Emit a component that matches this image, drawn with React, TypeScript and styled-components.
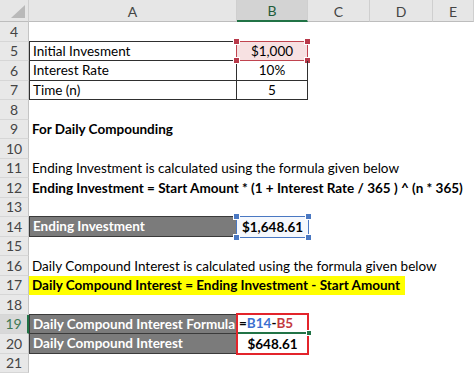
import React from 'react'
import styled, { createGlobalStyle, css } from 'styled-components'

const GlobalStyle = createGlobalStyle`
  html, body {
    margin: 0;
    padding: 0;
    background: #ffffff;
  }
  body {
    font-family: Lato, "Liberation Sans", sans-serif;
    font-size: 13.5px;
    color: #000000;
    overflow: hidden;
  }
`

const Sheet = styled.div`
  display: grid;
  grid-template-columns: 29px 208px 71px 62px 63px 1fr;
  grid-template-rows: 22px repeat(18, 19.5px);
  width: 474px;
  height: 373px;
  overflow: hidden;
`

const Corner = styled.div`
  background: #e6e6e6;
  border-right: 1px solid #cfcfcf;
  border-bottom: 1px solid #bdbdbd;
  display: flex;
  align-items: flex-end;
  justify-content: flex-end;
  padding: 0 3px 3px 0;
  box-sizing: border-box;
`

const ColHeader = styled.div<{ $active?: boolean }>`
  background: ${({ $active }) => ($active ? '#d3d3d3' : '#e6e6e6')};
  border-right: 1px solid #cfcfcf;
  border-bottom: ${({ $active }) => ($active ? '2px solid #217346' : '1px solid #bdbdbd')};
  color: ${({ $active }) => ($active ? '#1f5c3a' : '#444444')};
  display: flex;
  align-items: center;
  justify-content: center;
  box-sizing: border-box;
  font-size: 14px;
  padding-top: 1px;
`

const RowNum = styled.div<{ $active?: boolean }>`
  background: ${({ $active }) => ($active ? '#d8d8d8' : '#e8e8e8')};
  border-bottom: 1px solid #d6d6d6;
  border-right: ${({ $active }) => ($active ? '2px solid #217346' : '1px solid #c4c4c4')};
  color: ${({ $active }) => ($active ? '#3f7a55' : '#444444')};
  display: flex;
  align-items: center;
  justify-content: center;
  box-sizing: border-box;
  font-size: 14px;
`

const LineText = styled.div<{ $bold?: boolean }>`
  grid-column: 2 / -1;
  display: flex;
  align-items: center;
  padding-left: 3px;
  white-space: nowrap;
  font-weight: ${({ $bold }) => ($bold ? 700 : 400)};
`

const Highlight = styled.span`
  display: flex;
  align-items: center;
  align-self: stretch;
  width: 373px;
  margin-left: -3px;
  padding-left: 3px;
  background: #ffff00;
`

const Empty = styled.div`
  grid-column: 2 / -1;
`

const LabelCell = styled.div<{ $dark?: boolean; $top?: boolean }>`
  display: flex;
  align-items: center;
  padding-left: 3px;
  box-sizing: border-box;
  white-space: nowrap;
  border: 1px solid #2f2f2f;
  border-top-width: ${({ $top }) => ($top ? '1px' : '0')};
  margin-top: ${({ $top }) => ($top ? '-1px' : '0')};
  ${({ $dark }) =>
    $dark &&
    css`
      background: #7b7b7b;
      color: #ffffff;
      font-weight: 700;
      border-color: #3a3a3a;
    `}
`

const ValueCell = styled.div<{ $top?: boolean; $bold?: boolean; $plain?: boolean }>`
  position: relative;
  display: flex;
  align-items: center;
  justify-content: center;
  box-sizing: border-box;
  border-right: 1px solid #2f2f2f;
  border-bottom: 1px solid #2f2f2f;
  border-top: ${({ $top }) => ($top ? '1px solid #2f2f2f' : '0')};
  margin-top: ${({ $top }) => ($top ? '-1px' : '0')};
  font-weight: ${({ $bold }) => ($bold ? 700 : 400)};
  ${({ $plain }) => $plain && 'border: 0;'}
`

const Rest = styled.div`
  grid-column: 4 / -1;
`

const Selection = styled.div<{ $color: string; $fill: string }>`
  position: absolute;
  inset: -1px;
  border: 1.5px solid ${({ $color }) => $color};
  background: ${({ $fill }) => $fill};
  z-index: 0;
`

const Handle = styled.span<{ $color: string; $x: 'left' | 'right'; $y: 'top' | 'bottom' }>`
  position: absolute;
  width: 5px;
  height: 5px;
  background: ${({ $color }) => $color};
  border: 1px solid #ffffff;
  box-sizing: content-box;
  ${({ $x }) => ($x === 'left' ? 'left: -4px;' : 'right: -4px;')}
  ${({ $y }) => ($y === 'top' ? 'top: -4px;' : 'bottom: -4px;')}
`

const CellText = styled.span`
  position: relative;
  z-index: 1;
`

const FormulaCell = styled.div`
  position: relative;
  display: flex;
  align-items: center;
  padding-left: 2px;
  font-weight: 700;
  border-bottom: 2px solid #217346;
  box-sizing: border-box;
`

/* red box drawn over B19:B20 */
const RedFrame = styled.span`
  position: absolute;
  left: -1px;
  right: -1px;
  top: -2px;
  height: 42px;
  border: 2px solid #e3242b;
  box-sizing: border-box;
  z-index: 3;
  pointer-events: none;
`

const FillHandle = styled.span`
  position: absolute;
  right: -4px;
  bottom: -4px;
  width: 4px;
  height: 4px;
  background: #217346;
  border: 1px solid #ffffff;
  z-index: 4;
`

const Ref = styled.span<{ $color: string }>`
  color: ${({ $color }) => $color};
`

const CornerIcon = () => (
  <svg width="14" height="13" viewBox="0 0 14 13">
    <polygon points="14,0 14,13 0,13" fill="#b9b9b9" />
  </svg>
)

const Handles = ({ color }: { color: string }) => (
  <>
    <Handle $color={color} $x="left" $y="top" />
    <Handle $color={color} $x="right" $y="top" />
    <Handle $color={color} $x="left" $y="bottom" />
    <Handle $color={color} $x="right" $y="bottom" />
  </>
)

type Row =
  | { n: number; kind: 'empty' }
  | { n: number; kind: 'text'; text: string; bold?: boolean; yellow?: boolean }
  | { n: number; kind: 'pair'; label: string; value: string; top?: boolean; select?: boolean }
  | { n: number; kind: 'result'; label: string; value: React.ReactNode; variant: 'blue' | 'formula' | 'final' }

const rows: Row[] = [
  { n: 4, kind: 'empty' },
  { n: 5, kind: 'pair', label: 'Initial Invesment', value: '$1,000', top: true, select: true },
  { n: 6, kind: 'pair', label: 'Interest Rate', value: '10%' },
  { n: 7, kind: 'pair', label: 'Time (n)', value: '5' },
  { n: 8, kind: 'empty' },
  { n: 9, kind: 'text', text: 'For Daily Compounding', bold: true },
  { n: 10, kind: 'empty' },
  { n: 11, kind: 'text', text: 'Ending Investment is calculated using the formula given below' },
  { n: 12, kind: 'text', text: 'Ending Investment = Start Amount * (1 + Interest Rate / 365 ) ^ (n * 365)', bold: true },
  { n: 13, kind: 'empty' },
  { n: 14, kind: 'result', label: 'Ending Investment', value: '$1,648.61', variant: 'blue' },
  { n: 15, kind: 'empty' },
  { n: 16, kind: 'text', text: 'Daily Compound Interest is calculated using the formula given below' },
  { n: 17, kind: 'text', text: 'Daily Compound Interest = Ending Investment - Start Amount', bold: true, yellow: true },
  { n: 18, kind: 'empty' },
  {
    n: 19,
    kind: 'result',
    label: 'Daily Compound Interest Formula',
    variant: 'formula',
    value: (
      <>
        =<Ref $color="#3c6fd0">B14</Ref>-<Ref $color="#c4393f">B5</Ref>
      </>
    ),
  },
  { n: 20, kind: 'result', label: 'Daily Compound Interest', value: '$648.61', variant: 'final' },
  { n: 21, kind: 'empty' },
]

const renderRow = (row: Row) => {
  switch (row.kind) {
    case 'empty':
      return <Empty key={`c${row.n}`} />
    case 'text':
      return (
        <LineText key={`c${row.n}`} $bold={row.bold}>
          {row.yellow ? <Highlight>{row.text}</Highlight> : row.text}
        </LineText>
      )
    case 'pair':
      return (
        <React.Fragment key={`c${row.n}`}>
          <LabelCell $top={row.top}>{row.label}</LabelCell>
          <ValueCell $top={row.top}>
            {row.select && (
              <Selection $color="#c0444f" $fill="#f7e1e2">
                <Handles color="#b8394a" />
              </Selection>
            )}
            <CellText>{row.value}</CellText>
          </ValueCell>
          <Rest />
        </React.Fragment>
      )
    case 'result':
      return (
        <React.Fragment key={`c${row.n}`}>
          <LabelCell $dark $top={row.variant !== 'final'}>{row.label}</LabelCell>
          {row.variant === 'blue' && (
            <ValueCell $bold $plain>
              <Selection $color="#4a78c2" $fill="#f5f8fd">
                <Handles color="#4a78c2" />
              </Selection>
              <CellText>{row.value}</CellText>
            </ValueCell>
          )}
          {row.variant === 'formula' && (
            <FormulaCell>
              {row.value}
              <RedFrame />
              <FillHandle />
            </FormulaCell>
          )}
          {row.variant === 'final' && (
            <ValueCell $bold $plain>
              <CellText>{row.value}</CellText>
            </ValueCell>
          )}
          <Rest />
        </React.Fragment>
      )
  }
}

const App: React.FC = () => {
  return (
    <>
      <GlobalStyle />
      <Sheet>
        <Corner>
          <CornerIcon />
        </Corner>
        <ColHeader>A</ColHeader>
        <ColHeader $active>B</ColHeader>
        <ColHeader>C</ColHeader>
        <ColHeader>D</ColHeader>
        <ColHeader>E</ColHeader>
        {rows.map((row) => (
          <React.Fragment key={row.n}>
            <RowNum $active={row.n === 19}>{row.n}</RowNum>
            {renderRow(row)}
          </React.Fragment>
        ))}
      </Sheet>
    </>
  )
}

export default App
